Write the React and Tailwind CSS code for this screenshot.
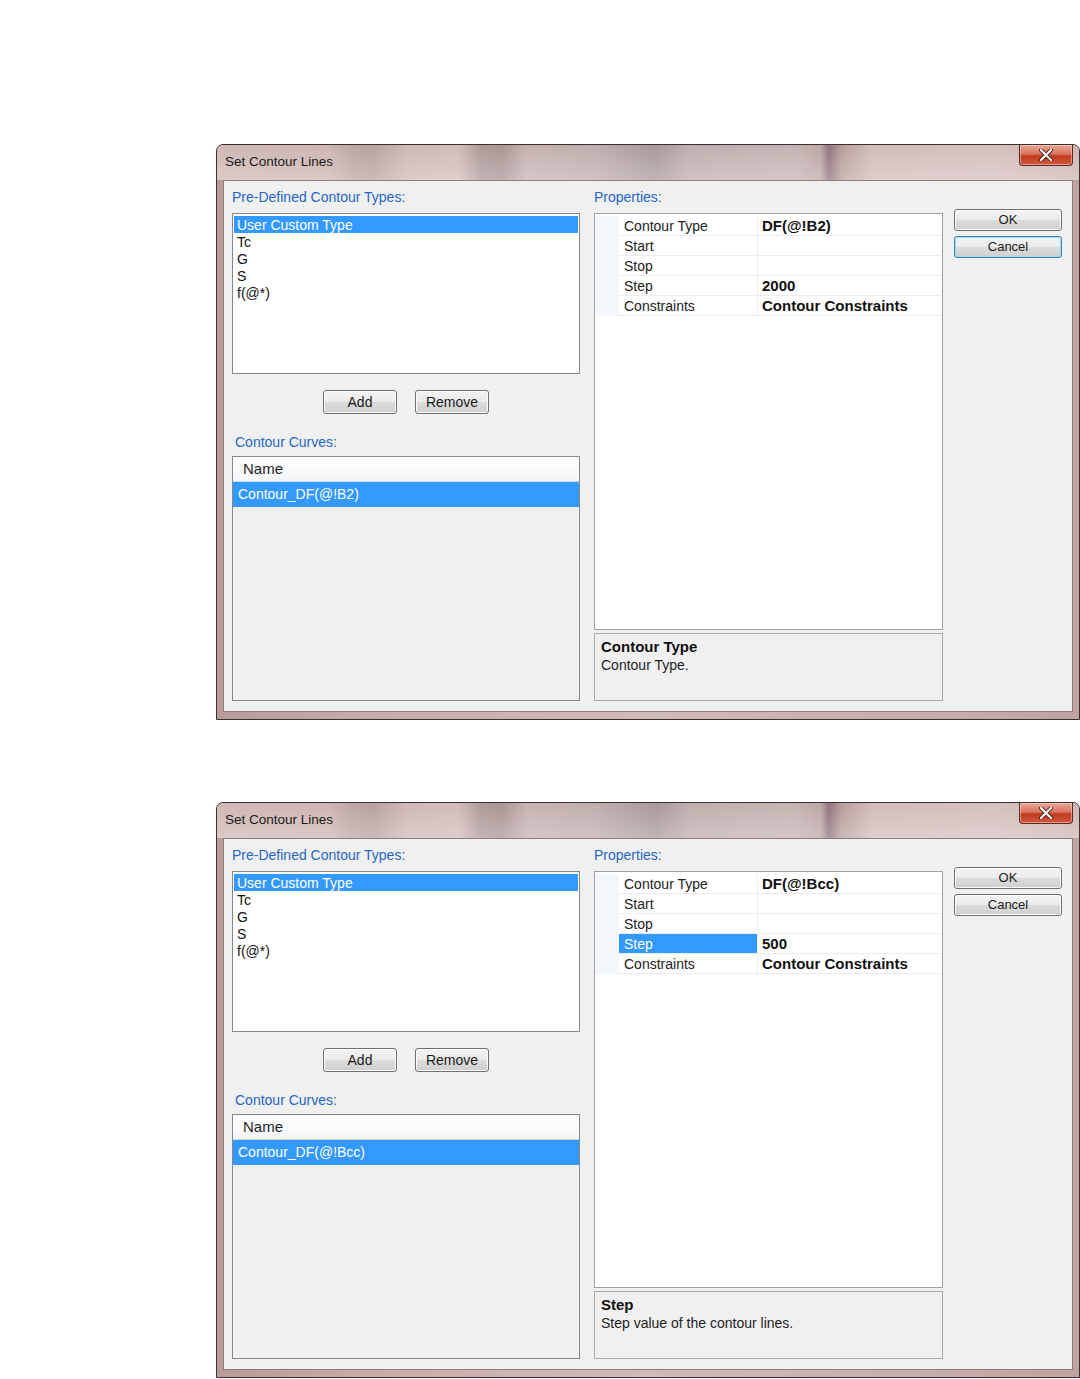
import React from "react"

const FONT = { fontFamily: '"Liberation Sans", Arial, sans-serif' }

const types = ["User Custom Type", "Tc", "G", "S", "f(@*)"]

// Win7 style push button
const Button = ({ label, focused, className }) => (
  <div
    className={
      "flex items-center justify-center rounded-[3px] border text-[#1b1b1b] " +
      "bg-[linear-gradient(to_bottom,#f3f3f3_0%,#ebebeb_48%,#dcdcdc_52%,#cfcfcf_100%)] " +
      (focused
        ? "border-[#3c7fb1] shadow-[inset_0_0_0_1px_#9fdcf7] "
        : "border-[#707070] shadow-[inset_0_0_0_1px_#fbfbfb] ") +
      className
    }
  >
    {label}
  </div>
)

const CloseButton = () => (
  <div className="mr-[6px] flex h-[21px] w-[54px] items-center justify-center rounded-b-[4px] border border-t-0 border-[#5a2a24] bg-[linear-gradient(to_bottom,#e9a899_0%,#d9735f_45%,#c13b22_55%,#d0583c_100%)] shadow-[inset_0_0_0_1px_rgba(255,220,210,0.5)]">
    <svg width="14" height="12" viewBox="0 0 14 12">
      <path d="M2 1 L12 11 M12 1 L2 11" stroke="#4a1e18" strokeWidth="4" strokeLinecap="round" />
      <path d="M2 1 L12 11 M12 1 L2 11" stroke="#ffffff" strokeWidth="2.2" strokeLinecap="round" />
    </svg>
  </div>
)

const Dialog = ({ typeValue, stepValue, curveName, selectedRow, descTitle, descText, cancelFocused }) => {
  const rows = [
    { name: "Contour Type", value: typeValue },
    { name: "Start", value: "" },
    { name: "Stop", value: "" },
    { name: "Step", value: stepValue },
    { name: "Constraints", value: "Contour Constraints" },
  ]

  return (
    <div
      className="flex h-[576px] w-[864px] flex-col rounded-t-[7px] border border-[#3b3030] bg-[linear-gradient(to_right,#b99c9a_0%,#c9adab_20%,#d2bab8_50%,#c8aeac_80%,#bfa3a1_100%)]"
      style={FONT}
    >
      {/* Title bar */}
      <div className="flex h-[35px] items-start justify-between rounded-t-[6px] bg-[linear-gradient(to_bottom,rgba(255,255,255,0.05),rgba(255,255,255,0.3)),linear-gradient(to_right,#cdb3b1_0%,#cbb1af_13%,#b8a09e_16%,#b49c9a_18%,#cdb4b2_22%,#d0b8b6_28%,#aa9694_30.5%,#a48f8d_33%,#c3afad_36%,#bba9a7_44%,#ac9c9c_48%,#a49494_51%,#bcaaa8_55%,#c2b0ae_67%,#b8a2a0_70%,#8a6a78_71%,#b59a98_72.5%,#d0b8b6_76%,#d2bcba_90%,#cbb2b0_100%)]">
        <div className="pl-[8px] pt-[8px] text-[13.5px] leading-[17px] text-[#1a1a1a]">Set Contour Lines</div>
        <CloseButton />
      </div>

      {/* Client area */}
      <div className="mx-[6px] mb-[7px] flex flex-1 border border-[#8f7d7b] bg-[#f0f0f0] pb-[10px] pl-[8px] text-[14px] text-[#1e1e1e]">
        {/* Left column */}
        <div className="flex w-[348px] flex-col">
          <div className="h-[32px] pt-[8px] leading-[17px] text-[#2667c4]">Pre-Defined Contour Types:</div>
          <div className="h-[161px] border border-[#828790] bg-white p-[1px] pt-[2px]">
            {types.map((t, i) => (
              <div
                key={t}
                className={
                  "h-[17px] pl-[3px] leading-[18px] " + (i === 0 ? "bg-[#3399ff] text-white" : "text-[#111]")
                }
              >
                {t}
              </div>
            ))}
          </div>
          <div className="mt-[16px] flex justify-center gap-[18px]">
            <Button label="Add" className="h-[24px] w-[74px]" />
            <Button label="Remove" className="h-[24px] w-[74px]" />
          </div>
          <div className="h-[42px] pl-[3px] pt-[20px] leading-[17px] text-[#2667c4]">Contour Curves:</div>
          <div className="flex flex-1 flex-col border border-[#828790] bg-[#f0f0f0]">
            <div className="flex h-[25px] items-center border-b border-[#d5d5d5] bg-[linear-gradient(to_bottom,#ffffff,#f4f5f7)] pl-[10px] text-[15px] text-[#1e1e1e]">
              Name
            </div>
            <div className="flex h-[25px] items-center bg-[#3399ff] pl-[5px] text-white">{curveName}</div>
          </div>
        </div>

        {/* Middle column */}
        <div className="ml-[14px] flex w-[349px] flex-col">
          <div className="h-[32px] pt-[8px] leading-[17px] text-[#2667c4]">Properties:</div>
          <div className="h-[417px] border border-[#a0a0a0] bg-white pt-[2px]">
            {rows.map((r, i) => (
              <div key={r.name} className="flex h-[20px]">
                <div className="w-[24px] bg-[#f3f6fb]" />
                <div
                  className={
                    "w-[139px] border-b border-r border-[#ececec] pl-[5px] leading-[20px] " +
                    (selectedRow === i ? "bg-[#3399ff] text-white" : "text-[#222]")
                  }
                >
                  {r.name}
                </div>
                <div className="flex-1 border-b border-[#ececec] pl-[4px] text-[15px] font-bold leading-[20px] text-[#111]">
                  {r.value}
                </div>
              </div>
            ))}
          </div>
          <div className="mt-[3px] h-[68px] border border-[#a8a8a8] bg-[#f0f0f0] pl-[6px] pt-[4px]">
            <div className="text-[15px] font-bold leading-[18px] text-[#111]">{descTitle}</div>
            <div className="leading-[18px] text-[#1e1e1e]">{descText}</div>
          </div>
        </div>

        {/* Right column */}
        <div className="ml-[11px] flex w-[108px] flex-col gap-[5px] pt-[28px] text-[13px]">
          <Button label="OK" className="h-[22px] w-[108px]" />
          <Button label="Cancel" focused={cancelFocused} className="h-[22px] w-[108px]" />
        </div>
      </div>
    </div>
  )
}

const App = () => {
  return (
    <div className="flex min-h-[1379px] flex-col gap-[82px] overflow-hidden bg-white pl-[216px] pt-[144px]">
      <Dialog
        typeValue="DF(@!B2)"
        stepValue="2000"
        curveName="Contour_DF(@!B2)"
        selectedRow={-1}
        descTitle="Contour Type"
        descText="Contour Type."
        cancelFocused
      />
      <Dialog
        typeValue="DF(@!Bcc)"
        stepValue="500"
        curveName="Contour_DF(@!Bcc)"
        selectedRow={3}
        descTitle="Step"
        descText="Step value of the contour lines."
      />
    </div>
  )
}

export default App
